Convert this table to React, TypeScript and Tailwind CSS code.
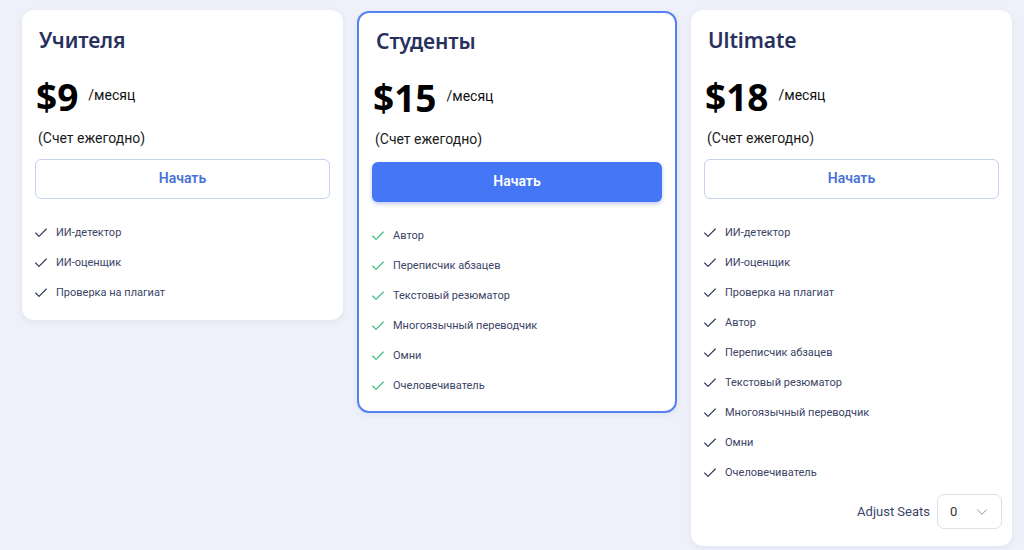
import { Check, ChevronDown } from "lucide-react";

type Plan = {
  name: string;
  price: string;
  features: string[];
  featured?: boolean;
  seats?: boolean;
};

const plans: Plan[] = [
  {
    name: "Учителя",
    price: "$9",
    features: ["ИИ-детектор", "ИИ-оценщик", "Проверка на плагиат"],
  },
  {
    name: "Студенты",
    price: "$15",
    featured: true,
    features: [
      "Автор",
      "Переписчик абзацев",
      "Текстовый резюматор",
      "Многоязычный переводчик",
      "Омни",
      "Очеловечиватель",
    ],
  },
  {
    name: "Ultimate",
    price: "$18",
    seats: true,
    features: [
      "ИИ-детектор",
      "ИИ-оценщик",
      "Проверка на плагиат",
      "Автор",
      "Переписчик абзацев",
      "Текстовый резюматор",
      "Многоязычный переводчик",
      "Омни",
      "Очеловечиватель",
    ],
  },
];

function PlanCard({ plan }: { plan: Plan }) {
  return (
    <div
      className={
        plan.featured
          ? "mt-[1px] w-[320px] shrink-0 self-start rounded-[12px] border-2 border-[#5582ee] bg-white px-[13px] pt-[13px] pb-[15px] shadow-[0_2px_6px_rgba(60,80,140,0.08)]"
          : "w-[321px] shrink-0 self-start rounded-[12px] bg-white px-[13px] pt-[15px] pb-[17px] shadow-[0_2px_6px_rgba(60,80,140,0.08)]"
      }
    >
      <h2
        className="pl-[4px] text-[21px] leading-[30px] font-semibold tracking-[-0.1px] text-[#28305e]"
        style={{ fontFamily: '"Noto Sans", sans-serif' }}
      >
        {plan.name}
      </h2>

      <div className="mt-[22px] flex h-[40px] items-center pl-[1px]">
        <span
          className="text-[37px] leading-[40px] font-bold text-black"
          style={{ fontFamily: '"Noto Sans", sans-serif' }}
        >
          {plan.price}
        </span>
        <span className="mt-[-4px] ml-[10px] text-[14px] text-[#111]">/месяц</span>
      </div>

      <p className="mt-[11px] pl-[3px] text-[14px] leading-[20px] text-[#1a1a1a]">
        (Счет ежегодно)
      </p>

      {plan.featured ? (
        <button className="mt-[13px] h-[40px] w-full rounded-[6px] bg-[#4576f6] pb-[2px] text-[14px] font-semibold text-white shadow-[0_2px_4px_rgba(40,80,180,0.3)]">
          Начать
        </button>
      ) : (
        <button className="mt-[11px] h-[40px] w-full rounded-[6px] border border-[#c4d2ee] bg-white pb-[2px] text-[14px] font-semibold text-[#4a72d6]">
          Начать
        </button>
      )}

      <ul className="mt-[24px] flex flex-col gap-[10px]">
        {plan.features.map((f) => (
          <li key={f} className="flex h-[20px] items-center">
            <Check
              size={16}
              strokeWidth={1.7}
              className={
                plan.featured
                  ? "ml-[-2px] text-[#3fb97c]"
                  : "ml-[-2px] text-[#2e3656]"
              }
            />
            <span className="ml-[7px] text-[11px] text-[#3b4466]">{f}</span>
          </li>
        ))}
      </ul>

      {plan.seats && (
        <div className="mt-[11px] flex items-center justify-end gap-[7px]">
          <span className="text-[13px] text-[#3b4466]">Adjust Seats</span>
          <div className="mr-[-3px] flex h-[35px] w-[65px] items-center justify-between rounded-[7px] border border-[#dcdfe8] bg-white pr-[10px] pl-[12px]">
            <span className="text-[13px] text-[#333]">0</span>
            <ChevronDown size={18} strokeWidth={1.2} className="text-[#888]" />
          </div>
        </div>
      )}
    </div>
  );
}

export default function App() {
  return (
    <div
      className="flex h-[550px] w-[1024px] gap-[14px] overflow-hidden bg-[#eef1f9] pt-[10px] pl-[22px]"
      style={{ fontFamily: 'Roboto, "Noto Sans", sans-serif' }}
    >
      {plans.map((p) => (
        <PlanCard key={p.name} plan={p} />
      ))}
    </div>
  );
}
